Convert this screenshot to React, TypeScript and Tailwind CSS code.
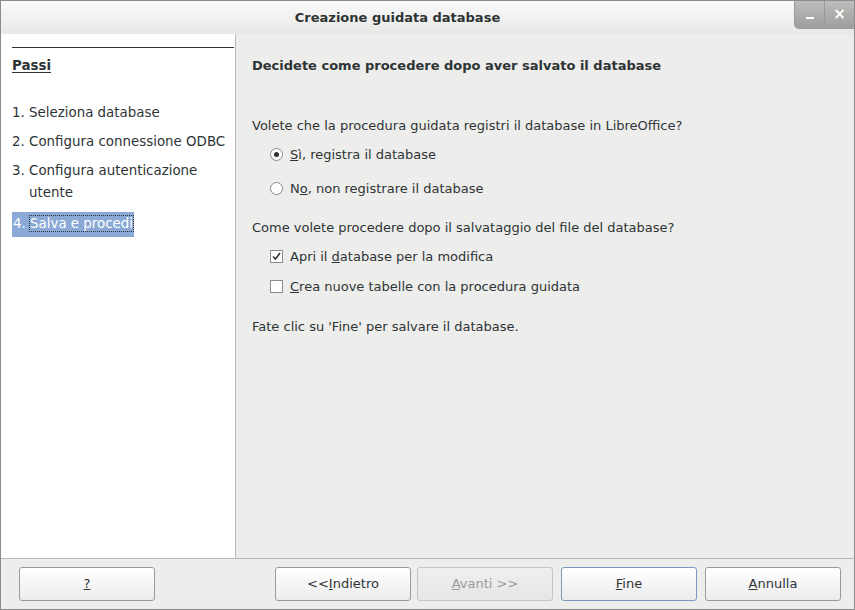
const font = { fontFamily: '"DejaVu Sans", sans-serif' };

function Btn({ children, disabled, focus }: { children: React.ReactNode; disabled?: boolean; focus?: boolean }) {
  return (
    <button
      type="button"
      className={
        "h-[34px] w-[136px] rounded-[3px] border text-[13px] bg-gradient-to-b " +
        (disabled
          ? "border-[#c4c4c4] from-[#efefef] to-[#e6e6e6] text-[#9a9a9a]"
          : focus
          ? "border-[#7d98bd] from-[#ffffff] to-[#ececec] text-[#2e3436]"
          : "border-[#9a9a9a] from-[#ffffff] to-[#ececec] text-[#2e3436]")
      }
    >
      {children}
    </button>
  );
}

function Radio({ on }: { on?: boolean }) {
  return (
    <span className="flex h-[13px] w-[13px] items-center justify-center rounded-full border border-[#8a8a8a] bg-white">
      {on && <span className="h-[5px] w-[5px] rounded-full bg-[#2e3436]" />}
    </span>
  );
}

function Check({ on }: { on?: boolean }) {
  return (
    <span className="flex h-[13px] w-[13px] items-center justify-center border border-[#8a8a8a] bg-white">
      {on && (
        <svg width="9" height="9" viewBox="0 0 9 9">
          <path d="M1 4.5 L3.5 7 L8 1" stroke="#2e3436" strokeWidth="1.6" fill="none" />
        </svg>
      )}
    </span>
  );
}

export default function App() {
  return (
    <div style={font} className="flex h-[610px] w-[855px] flex-col overflow-hidden border border-[#8c8c8c] bg-[#ededeb] text-[13px] text-[#2e3436]">
      <div className="relative flex h-[33px] shrink-0 items-center justify-center bg-gradient-to-b from-[#fafafa] to-[#e8e8e6]">
        <span className="-ml-[60px] font-semibold text-[13px]">Creazione guidata database</span>
        <div className="absolute right-0 top-0 flex">
          <div className="flex h-[28px] w-[30px] items-center justify-center rounded-bl-[5px] border-b border-l border-[#9a9a9a] bg-gradient-to-b from-[#bdbdbd] to-[#9e9e9e]">
            <span className="mt-[6px] h-[2px] w-[8px] bg-white" />
          </div>
          <div className="flex h-[28px] w-[30px] items-center justify-center border-b border-l border-[#9a9a9a] bg-gradient-to-b from-[#bdbdbd] to-[#9e9e9e] text-[15px] font-bold text-white">
            ×
          </div>
        </div>
      </div>
      <div className="flex flex-1">
        <div className="w-[235px] shrink-0 border-r border-[#b8b8b8] bg-white pl-[11px] pr-[1px] text-[13.4px]">
          <div className="mt-[13px] border-t border-[#2e3436]" />
          <div className="mt-[8px] font-bold underline underline-offset-2">Passi</div>
          <div className="mt-[27px] flex flex-col gap-[9px]">
            <div>1. Seleziona database</div>
            <div>2. Configura connessione ODBC</div>
            <div className="flex"><span>3.&nbsp;</span><span>Configura autenticazione<br /><span className="leading-[24px]">utente</span></span></div>
            <div><span className="-mt-[2px] inline-block bg-[#8aa9d6] px-[1px] py-[2px] text-white">4. <span className="outline outline-1 outline-dotted outline-[#2e3436]">Salva e procedi</span></span></div>
          </div>
        </div>
        <div className="flex-1 pl-[16px] pt-[22px]">
          <div className="font-bold">Decidete come procedere dopo aver salvato il database</div>
          <div className="mt-[40px]">Volete che la procedura guidata registri il database in LibreOffice?</div>
          <div className="ml-[18px] mt-[10px] flex items-center gap-[7px]"><Radio on /><span><u>S</u>ì, registra il database</span></div>
          <div className="ml-[18px] mt-[14px] flex items-center gap-[7px]"><Radio /><span>N<u>o</u>, non registrare il database</span></div>
          <div className="mt-[20px]">Come volete procedere dopo il salvataggio del file del database?</div>
          <div className="ml-[18px] mt-[9px] flex items-center gap-[7px]"><Check on /><span>Apri il <u>d</u>atabase per la modifica</span></div>
          <div className="ml-[18px] mt-[11px] flex items-center gap-[7px]"><Check /><span><u>C</u>rea nuove tabelle con la procedura guidata</span></div>
          <div className="mt-[20px]">Fate clic su 'Fine' per salvare il database.</div>
        </div>
      </div>
      <div className="flex h-[51px] shrink-0 items-center border-t border-[#b8b8b8] pl-[18px] pr-[13px]">
        <Btn><u>?</u></Btn>
        <div className="flex-1" />
        <div className="flex gap-[6px]">
          <Btn>&lt;&lt;<u>I</u>ndietro</Btn>
          <Btn disabled><u>A</u>vanti &gt;&gt;</Btn>
        </div>
        <div className="ml-[8px] flex gap-[8px]">
          <Btn focus><u>F</u>ine</Btn>
          <Btn><u>A</u>nnulla</Btn>
        </div>
      </div>
    </div>
  );
}
